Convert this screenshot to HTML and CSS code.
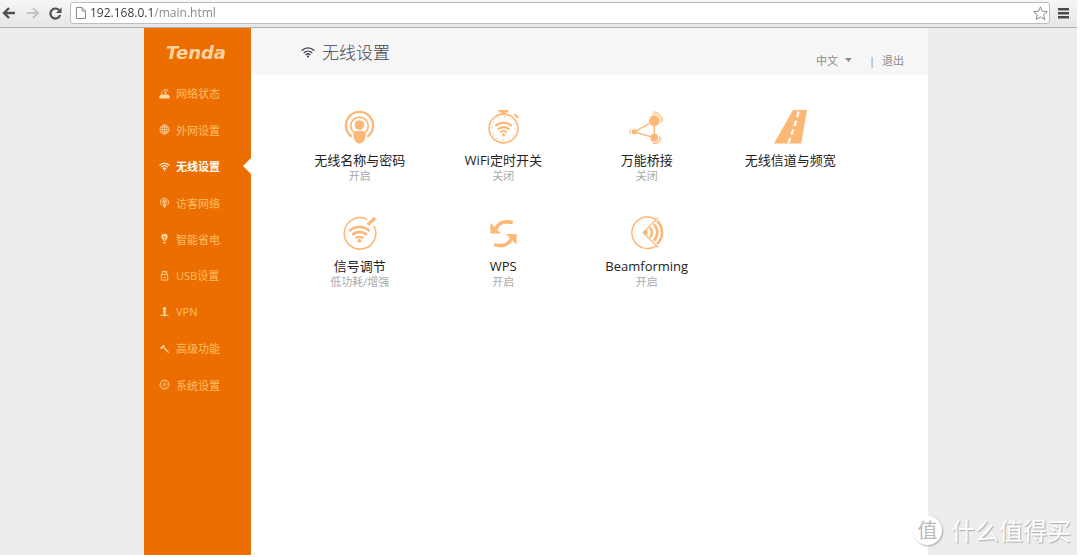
FILE: index.html
```html
<!DOCTYPE html>
<html lang="zh-CN">
<head>
<meta charset="utf-8">
<title>无线设置</title>
<link rel="stylesheet" href="styles.css">
</head>
<body>
<svg class="defs" aria-hidden="true">
  <symbol id="wifi" viewBox="0 0 24 20">
    <g fill="none" stroke="currentColor" stroke-width="2.4" stroke-linecap="round">
      <path d="M2 7a14.500 14.500 0 0 1 20 0M5.500 11a9.500 9.500 0 0 1 13 0M8.800 14.500a5 5 0 0 1 6.400 0"/>
    </g>
    <circle cx="12" cy="17.800" r="1.800" fill="currentColor"/>
  </symbol>
</svg>
<header class="toolbar">
  <button class="tool" aria-label="后退"><svg width="14" height="12" viewBox="0 0 14 12" fill="none" stroke="#505050" stroke-width="2.400"><path d="M13 6H3M7 1L2 6l5 5"/></svg></button>
  <button class="tool tool-next" aria-label="前进"><svg width="14" height="12" viewBox="0 0 14 12" fill="none" stroke="#c4c4c4" stroke-width="2.200"><path d="M1 6h10M7 1l5 5-5 5"/></svg></button>
  <button class="tool tool-reload" aria-label="刷新"><svg width="13" height="13" viewBox="0 0 13 13"><path d="M10 3a5 5 0 1 0 1.200 5" fill="none" stroke="#505050" stroke-width="2.200"/><path d="M12.500.5v5.500H7z" fill="#505050"/></svg></button>
  <div class="address">
    <svg width="10" height="12" viewBox="0 0 10 12" fill="#fff" stroke="#8a8a8a"><path d="M.5.5h5.500l3.500 3.500v7.500h-9zM6 .5V4h3.500"/></svg>
    <input class="url" type="text" value="192.168.0.1/main.html" aria-label="地址">
    <button class="star" aria-label="收藏"><svg width="15" height="14" viewBox="0 0 15 14" fill="none" stroke="#8a8a8a"><path d="M7.500 .8l1.900 4.300 4.900.5-3.700 3.200 1.200 4.700-4.300-2.600-4.300 2.600 1.200-4.700L.7 5.600l4.900-.5z"/></svg></button>
  </div>
  <button class="menu" aria-label="菜单"><svg width="11" height="11" viewBox="0 0 11 11" fill="#4a4a4a"><path d="M0 0h11v2.500H0zM0 4h11v2.500H0zM0 8h11v2.500H0z"/></svg></button>
</header>
<div class="stage">
  <div class="router">
    <aside class="sidebar">
      <div class="brand">Tenda</div>
      <nav class="nav">
        <a href="#"><svg viewBox="0 0 12 12"><g fill="none" stroke="currentColor"><path d="M4 3.500a3.500 3.500 0 0 1 6 0M5.500 5a2 2 0 0 1 3 0M7 4.500V8M3 4v3"/></g><path d="M2 7h8l1.500 2v2.500H.5V9z" fill="currentColor"/></svg>网络状态</a>
        <a href="#"><svg viewBox="0 0 12 12" fill="none" stroke="currentColor" stroke-width=".8"><circle cx="6" cy="6" r="5"/><ellipse cx="6" cy="6" rx="2.400" ry="5"/><path d="M6 1v10M1 6h10M1.800 3.500h8.400M1.800 8.500h8.400"/></svg>外网设置</a>
        <a href="#" class="active" aria-current="page"><svg><use href="#wifi"/></svg>无线设置</a>
        <a href="#"><svg viewBox="0 0 12 12"><g fill="none" stroke="currentColor" stroke-width=".9"><path d="M3.500 9.500a4.500 4.500 0 1 1 5 0M4 7a2.500 2.500 0 1 1 4 0"/></g><circle cx="6" cy="5" r="1.300" fill="currentColor"/><path d="M4.500 7h3L7 11.500H5z" fill="currentColor"/></svg>访客网络</a>
        <a href="#"><svg viewBox="0 0 12 12"><path d="M4.500 8.500C4.500 7 2.500 6.300 2.500 4.200a3.500 3.500 0 0 1 7 0c0 2.100-2 2.800-2 4.300z" fill="currentColor"/><path d="M4.700 3.500L6 6l1.300-2.500M6 6v2" fill="none" stroke="#ec6e00" stroke-width=".8"/><path d="M4.800 9.500h2.400v2H4.800z" fill="currentColor"/></svg>智能省电</a>
        <a href="#"><svg viewBox="0 0 12 12" fill="none" stroke="currentColor"><path d="M3.500 5V1.500h5V5M2.500 5h7v6h-7zM5 3h.8M6.600 3h.8M4.500 8h3"/></svg>USB设置</a>
        <a href="#"><svg viewBox="0 0 12 12" fill="currentColor"><circle cx="6" cy="3" r="2"/><path d="M4.500 4.500h3L7 8.500H5zM1.500 9.500h9v1.200h-9zM5 8h2v3.500H5z"/></svg>VPN</a>
        <a href="#"><svg viewBox="0 0 12 12" fill="none" stroke="currentColor"><path d="M1 5.500L5 1.800l1.500 1L3 6.500z" fill="currentColor" stroke="none"/><path d="M5 4.500l5.500 6" stroke-width="1.500"/></svg>高级功能</a>
        <a href="#"><svg viewBox="0 0 12 12" fill="none" stroke="currentColor"><circle cx="6" cy="6" r="4.900"/><circle cx="6" cy="6" r="1.100"/><circle cx="6" cy="6" r="3.400" stroke-width=".9" stroke-dasharray="1 1.670"/></svg>系统设置</a>
      </nav>
    </aside>
    <main class="content">
      <div class="head">
        <h1><svg class="head-icon"><use href="#wifi"/></svg>无线设置</h1>
        <div class="account">
          <label class="lang"><select aria-label="语言"><option>中文</option></select><svg width="7" height="4" viewBox="0 0 7 4"><path d="M0 0h7L3.500 4z" fill="#8c8c8c"/></svg></label>
          <span>|</span>
          <a href="#">退出</a>
        </div>
      </div>
      <div class="tiles">
        <a href="#" class="tile">
          <svg viewBox="0 0 36 36"><g fill="none" stroke="currentColor"><path d="M10 28.500a14 14 0 1 1 16 0" stroke-width="2.400"/><path d="M11.500 23.500a9 9 0 1 1 13 0" stroke-width="1.800"/></g><circle cx="18" cy="16.500" r="5" fill="currentColor"/><path d="M11.500 25q0-2.500 3-2.500h7q3 0 3 2.500c0 5-2 10.500-6.500 10.500S11.500 30 11.500 25z" fill="currentColor"/></svg>
          <span class="name">无线名称与密码</span><span class="state">开启</span>
        </a>
        <a href="#" class="tile">
          <svg viewBox="0 0 36 36"><path d="M13 1h10v2.500h-3V6h-4V3.500h-3zM28.500 6l4 4 2-1.500-4.500-4z" fill="currentColor"/><circle cx="18" cy="20" r="14.800" fill="none" stroke="currentColor" stroke-width="1.700"/><g fill="none" stroke="currentColor"><circle cx="18" cy="20" r="12" stroke-width="1.500" stroke-dasharray="1 5.283"/><path d="M9.500 17.500a13 13 0 0 1 17 0M12 21a9 9 0 0 1 12 0M14.500 24.200a5 5 0 0 1 7 0" stroke-width="2.200"/></g><circle cx="18" cy="26.500" r="1.600" fill="currentColor"/></svg>
          <span class="name">WiFi定时开关</span><span class="state">关闭</span>
        </a>
        <a href="#" class="tile">
          <svg viewBox="0 0 36 36"><g fill="none" stroke="currentColor"><path d="M5.500 23.500L26 12v17.500z" stroke-width="1.500"/><path d="M23.500 5a8 8 0 0 1 9.500 9.500M25 2.800a10.500 10.500 0 0 1 10 10.200M31.500 28a5.500 5.500 0 0 1-7.500 6.500M33 28.500a7 7 0 0 1-8 7.300M2 26a3.700 3.700 0 0 1 0-5.500" stroke-width="1"/></g><g fill="currentColor"><circle cx="26" cy="12" r="5.500"/><circle cx="26" cy="29.500" r="4"/><circle cx="5.500" cy="23.500" r="2.700"/></g></svg>
          <span class="name">万能桥接</span><span class="state">关闭</span>
        </a>
        <a href="#" class="tile">
          <svg viewBox="0 0 36 36"><path d="M20.500 1H35l-6 34.500H1z" fill="currentColor"/><path d="M26.300 2.500l-1.500 6M23.700 12l-1.600 5.500M20.700 21L19 26.500M17.700 29.500L16.200 35" stroke="#fff" stroke-width="2.200"/></svg>
          <span class="name">无线信道与频宽</span>
        </a>
        <a href="#" class="tile">
          <svg viewBox="0 0 36 36"><g fill="none" stroke="currentColor"><path d="M26 4.500A16.200 16.200 0 1 0 32.700 11" stroke-width="1.600"/><path d="M27.500 9L33 4" stroke-width="3.500" stroke-linecap="round"/><path d="M7.500 16.500a15.500 15.500 0 0 1 21 0M10.500 20.500a11 11 0 0 1 15 0M14 24a6 6 0 0 1 8 0" stroke-width="2.500"/></g><circle cx="18" cy="26.500" r="2" fill="currentColor"/></svg>
          <span class="name">信号调节</span><span class="state">低功耗/增强</span>
        </a>
        <a href="#" class="tile">
          <svg viewBox="0 0 36 36"><g fill="none" stroke="currentColor" stroke-width="3.600"><path d="M10 14.500C13 8 19 5.500 27.500 8M8.500 30.500c8.500 2.500 14.500.5 18-6.500"/></g><path d="M4.500 8v11h11zM31.500 30.500V19.500h-11z" fill="currentColor"/></svg>
          <span class="name">WPS</span><span class="state">开启</span>
        </a>
        <a href="#" class="tile">
          <svg viewBox="0 0 36 36"><g fill="none" stroke="currentColor"><path d="M28.500 5A16.200 16.200 0 1 0 28.500 31.500" stroke-width="1.500"/><path d="M30 3L14.500 18 30 33.500" stroke-width="1.300"/><path d="M21.500 13a7 7 0 0 1 0 10M25.500 9.500a12 12 0 0 1 0 17M29 6a17 17 0 0 1 0 24" stroke-width="2.700"/></g><path d="M14.500 18l3.500-3.200q2.500 3.200 0 6.700z" fill="currentColor"/></svg>
          <span class="name">Beamforming</span><span class="state">开启</span>
        </a>
      </div>
    </main>
  </div>
</div>
<div class="watermark"><span class="seal">值</span><span>什么值得买</span></div>
</body>
</html>
```
FILE: styles.css
```css
* { box-sizing: border-box; }

body {
  display: flex;
  flex-direction: column;
  min-height: 100vh;
  margin: 0;
  padding: 0 3px 2px 0;
  background: #fff;
  font-family: "Open Sans", "Noto Sans CJK SC", sans-serif;
  font-size: 11px;
}

a { color: inherit; text-decoration: none; }

button {
  display: flex;
  padding: 0;
  border: 0;
  background: none;
}

.defs { position: absolute; width: 0; height: 0; }

.toolbar {
  display: flex;
  align-items: center;
  height: 28px;
  padding: 0 8px 1px 2px;
  border-bottom: 1px solid #b4b4b4;
  background: linear-gradient(#f6f6f6, #e6e6e6);
}

.tool-next { margin-left: 10px; }
.tool-reload { margin-left: 9px; }

.address {
  display: flex;
  flex: 1;
  align-items: center;
  height: 22px;
  margin: 0 8px;
  padding: 0 1px 0 5px;
  border: 1px solid #bdbdbd;
  border-radius: 3px;
  background: #fff;
}

.url {
  flex: 1;
  min-width: 0;
  margin-left: 4px;
  padding: 0;
  border: 0;
  outline: 0;
  background: linear-gradient(90deg, #333 63px, #858585 63px);
  -webkit-background-clip: text;
  background-clip: text;
  color: transparent;
  font: 12px/18px "Open Sans", sans-serif;
}

.stage {
  display: flex;
  flex: 1;
  justify-content: center;
  padding-right: 5px;
  background: #ededed;
}

.router {
  display: flex;
  width: 100%;
  max-width: 784px;
}

.sidebar {
  width: 107px;
  background: #ec6e00;
}

.brand {
  height: 47px;
  padding-left: 22px;
  color: #ffd3a0;
  font: italic bold 18px/50px "DejaVu Sans", sans-serif;
}

.nav {
  display: grid;
  grid-template-rows: repeat(9, 1fr);
  height: 328px;
}

.nav a {
  position: relative;
  display: flex;
  align-items: center;
  gap: 6px;
  padding-left: 15px;
  color: #ffbf66;
}

.nav svg {
  width: 11px;
  height: 11px;
  color: #ffd7a3;
}

.nav .active { color: #fff; font-weight: bold; }
.nav .active svg { color: #fff; }

.nav .active::after {
  content: "";
  position: absolute;
  right: 0;
  border: 8px solid transparent;
  border-left: 0;
  border-right-color: #fff;
}

.content { flex: 1; background: #fff; }

.head {
  display: flex;
  justify-content: space-between;
  height: 47px;
  padding: 0 24px 0 50px;
  background: #f6f6f6;
}

h1 {
  display: flex;
  align-items: center;
  gap: 7px;
  margin: 0;
  color: #3d4450;
  font-size: 17px;
  font-weight: 300;
}

.head-icon { width: 14px; height: 14px; }

.account {
  display: flex;
  align-items: center;
  gap: 7px;
  padding-top: 17px;
  color: #8c8c8c;
}

.lang { display: flex; align-items: center; gap: 7px; margin-right: 10px; }

.lang select {
  appearance: none;
  padding: 0;
  border: 0;
  background: none;
  color: inherit;
  font: inherit;
}

.tiles {
  display: grid;
  grid-template-columns: repeat(4, 1fr);
  grid-auto-rows: 106px;
  padding: 34px 66px 0 37px;
}

.tile {
  display: flex;
  flex-direction: column;
  align-items: center;
}

.tile svg {
  width: 35px;
  height: 35px;
  color: #fdb777;
}

.name {
  margin-top: 7px;
  color: #222;
  font-size: 13px;
  line-height: 18px;
}

.state { color: #aaa; line-height: 13px; }

.watermark {
  position: absolute;
  right: 9px;
  bottom: 11px;
  display: flex;
  align-items: center;
  gap: 9px;
  color: #fff;
  font: 24px/32px "Noto Sans CJK SC", sans-serif;
  text-shadow: 1px 1px 1px #aaa;
}

.seal {
  width: 29px;
  height: 29px;
  border-radius: 50%;
  background: #fff;
  box-shadow: 1px 1px 2px #aaa;
  color: #b8b8b8;
  font-size: 20px;
  line-height: 28px;
  text-align: center;
  text-shadow: none;
}
```
